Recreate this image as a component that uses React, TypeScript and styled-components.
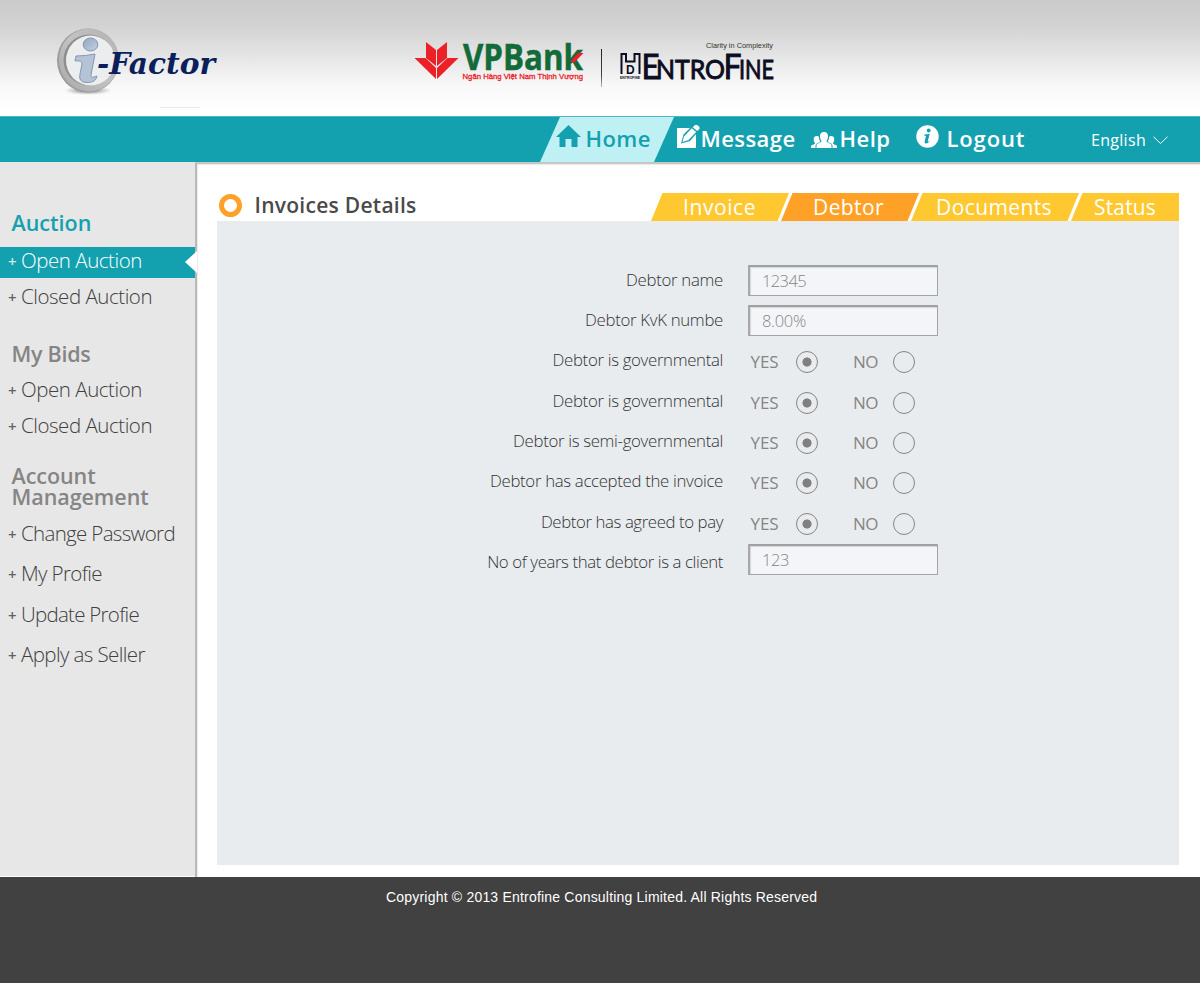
import React from "react";
import styled, { createGlobalStyle, css } from "styled-components";

const teal = "#13a1b0";
const sans = `"Open Sans", "Noto Sans", sans-serif`;

const Global = createGlobalStyle`
  *, *::before, *::after { box-sizing: border-box; }
  html, body { margin: 0; padding: 0; }
  body { background: #fff; font-family: ${sans}; }
  ul { list-style: none; margin: 0; padding: 0; }
`;

const Page = styled.div`
  width: 1200px;
  height: 983px;
  display: flex;
  flex-direction: column;
  overflow: hidden;
  background: #fff;
`;

const Header = styled.header`
  height: 116px;
  flex: none;
  display: flex;
  align-items: flex-start;
  background: linear-gradient(#cbcbcb 0, #d2d2d2 25px, #e4e4e4 55px, #f8f8f8 85px, #fefefe 108px, #fff 116px);
`;

const BrandLogo = styled.svg`
  display: block;
  flex: none;
  width: 200px;
  height: 116px;
  margin-left: 40px;
`;

const PartnerLogos = styled.svg`
  display: block;
  flex: none;
  width: 400px;
  height: 116px;
  margin-left: 160px;
`;

const Nav = styled.nav`
  height: 46px;
  flex: none;
  display: flex;
  align-items: stretch;
  padding-left: 540px;
  background: ${teal};
  border-top: 1px solid #4bb8c3;
`;

const NavItem = styled.a<{ $width: number; $active?: boolean; $pad: number; $gap: number }>`
  width: ${(p) => p.$width}px;
  flex: none;
  display: flex;
  align-items: center;
  padding: 0 0 3px ${(p) => p.$pad}px;
  gap: ${(p) => p.$gap}px;
  color: ${(p) => (p.$active ? teal : "#fff")};
  ${(p) =>
    p.$active &&
    css`
      background: #bff1f4;
      clip-path: polygon(20px 0, 100% 0, calc(100% - 20px) 100%, 0 100%);
    `}
`;

const NavText = styled.span<{ $track: number }>`
  font-size: 22px;
  line-height: 30px;
  font-weight: 600;
  white-space: nowrap;
  letter-spacing: ${(p) => p.$track}px;
`;

const Language = styled.button`
  margin: 0 32px 0 auto;
  padding: 0;
  border: 0;
  background: none;
  color: #fff;
  display: flex;
  align-items: center;
  gap: 7px;
  font: 400 16px/24px ${sans};
`;

const Icon = styled.svg<{ $up?: number; $down?: number }>`
  display: block;
  flex: none;
  margin-bottom: ${(p) => (p.$up ?? 0) * 2}px;
  margin-top: ${(p) => (p.$down ?? 0) * 2}px;
`;

const Body = styled.div`
  height: 715px;
  flex: none;
  display: flex;
`;

const Sidebar = styled.aside`
  width: 195px;
  height: 714px;
  flex: none;
  padding-top: 46px;
  background: #e7e7e7;
`;

const Group = styled.section<{ $top: number }>`
  margin-top: ${(p) => p.$top}px;
`;

const GroupTitle = styled.h2<{ $active?: boolean; $line: number; $track?: number }>`
  width: 160px;
  margin: 0 0 0 11.5px;
  font-size: 21.5px;
  font-weight: 600;
  line-height: ${(p) => p.$line}px;
  letter-spacing: ${(p) => p.$track ?? 0}px;
  color: ${(p) => (p.$active ? teal : "#858585")};
`;

const Menu = styled.ul<{ $top: number; $gap: number }>`
  display: flex;
  flex-direction: column;
  margin-top: ${(p) => p.$top}px;
  gap: ${(p) => p.$gap}px;
`;

const MenuItem = styled.li<{ $active?: boolean }>`
  height: 31px;
  display: flex;
  align-items: center;
  padding: 0 0 4px 8px;
  font-size: 20.5px;
  font-weight: 300;
  line-height: 27px;
  color: ${(p) => (p.$active ? "#fff" : "#404040")};
  position: relative;
  ${(p) =>
    p.$active &&
    css`
      background: ${teal};
      &::after {
        content: "";
        position: absolute;
        right: -2px;
        top: 4px;
        width: 12px;
        height: 22px;
        background: #fff;
        clip-path: polygon(100% 0, 100% 100%, 0 50%);
      }
    `}
`;

const Plus = styled.span`
  width: 13px;
  flex: none;
  font-size: 15px;
  font-weight: 600;
  line-height: 27px;
  padding-top: 2px;
  opacity: 0.8;
`;

const Tracked = styled.span<{ $track?: number }>`
  white-space: nowrap;
  letter-spacing: ${(p) => p.$track ?? 0}px;
`;

const Content = styled.main`
  flex: 1;
  display: flex;
  flex-direction: column;
  padding: 29px 21px 0 20px;
  border-left: 2px solid #b9b9b9;
  border-top: 2px solid #c6c6c6;
  box-shadow: inset 1px 1px 1px #eaeaea;
`;

const TitleBar = styled.div`
  height: 28px;
  display: flex;
  align-items: center;
`;

const Ring = styled.i`
  width: 23px;
  height: 23px;
  margin: -4px 13px 0 1.5px;
  border: 5px solid #ffa126;
  border-radius: 50%;
`;

const Title = styled.h1`
  margin: 0;
  padding-bottom: 4px;
  font-size: 21px;
  line-height: 26px;
  font-weight: 600;
  color: #4a4a4a;
`;

const Tabs = styled.div`
  display: flex;
  margin-left: auto;
  height: 28px;
`;

const Tab = styled.a<{ $width: number; $pad: number; $active?: boolean; $last?: boolean }>`
  width: ${(p) => p.$width}px;
  margin-left: -8px;
  padding: 0 0 0 ${(p) => p.$pad}px;
  font-size: 21px;
  line-height: 28px;
  color: #fff;
  background: ${(p) => (p.$active ? "#ffa126" : "#ffc730")};
  clip-path: ${(p) =>
    p.$last
      ? "polygon(11.5px 0, 100% 0, 100% 100%, 0 100%)"
      : "polygon(11.5px 0, 100% 0, calc(100% - 11.5px) 100%, 0 100%)"};
`;

const Panel = styled.form`
  height: 644px;
  padding-top: 38.6px;
  background: #e8ecef;
`;

const Row = styled.div`
  height: 40.35px;
  display: flex;
  align-items: center;
`;

const Label = styled.label`
  width: 506px;
  flex: none;
  display: flex;
  justify-content: flex-end;
  font-size: 16.8px;
  line-height: 24px;
  font-weight: 300;
  color: #333;
`;

const Field = styled.div<{ $shift: number }>`
  width: 190px;
  height: 31px;
  margin: ${(p) => p.$shift}px 0 0 25px;
  padding: 0 0 1px 12px;
  display: flex;
  align-items: center;
  border: 1px solid #a3a3a3;
  border-top: 2px solid #a0a0a0;
  border-left: 2px solid #a8a8a8;
  border-radius: 1px;
  background: #f4f5f8;
  box-shadow: inset 1px 1px 1px #d5d6d8;
  font-size: 16.5px;
  font-weight: 300;
  color: #858585;
`;

const Choice = styled.span<{ $width: number; $left: number }>`
  width: ${(p) => p.$width}px;
  display: flex;
  align-items: center;
  justify-content: space-between;
  margin-left: ${(p) => p.$left}px;
  padding-top: 3.5px;
  font-size: 17px;
  line-height: 24px;
  color: #858585;
`;

const Radio = styled.i<{ $on?: boolean }>`
  width: 22px;
  height: 22px;
  border: 1px solid #858585;
  border-radius: 50%;
  background: ${(p) => (p.$on ? "radial-gradient(circle, #808080 4.2px, transparent 4.9px)" : "none")};
`;

const Footer = styled.footer`
  height: 106px;
  flex: none;
  padding: 11px 0 0 386px;
  background: #414141;
  color: #fff;
  font: 14px/18px "Liberation Sans", Arial, sans-serif;
`;

const IFactor = () => (
  <BrandLogo viewBox="40 0 200 116">
    <defs>
      <linearGradient id="ring" x1="0" y1="1" x2="1" y2="0">
        <stop offset="0" stopColor="#a8a8a8" />
        <stop offset=".5" stopColor="#c2c2c2" />
        <stop offset="1" stopColor="#b2b2b2" />
      </linearGradient>
      <radialGradient id="shade">
        <stop offset="0" stopColor="#444" stopOpacity=".9" />
        <stop offset="1" stopColor="#999" stopOpacity="0" />
      </radialGradient>
      <linearGradient id="glass" x1="0" y1="0" x2="1" y2="1">
        <stop offset="0" stopColor="#93a7c0" />
        <stop offset="1" stopColor="#c3d0e0" />
      </linearGradient>
    </defs>
    <ellipse cx="88" cy="90.500" rx="24" ry="4.500" fill="url(#shade)" />
    <ellipse cx="88" cy="60.500" rx="31" ry="32" fill="#9c9c9c" />
    <ellipse cx="89" cy="60" rx="30" ry="31.500" fill="url(#ring)" />
    <ellipse cx="89" cy="60" rx="25.500" ry="25.500" fill="#8e8e8e" />
    <ellipse cx="90.500" cy="60.500" rx="24.500" ry="25" fill="#ecedee" />
    <ellipse cx="90.500" cy="44.500" rx="7.300" ry="6.500" fill="url(#glass)" stroke="#8094ad" />
    <path d="M76 56 Q86 56 95 54 L91 75 Q90 79 97 76 Q96 83 86 82.500 Q78 82 80 74 L82 64 Q82 60 75 61 Z" fill="#b4c3d5" stroke="#8498b0" />
    <text x="97" y="74" fontFamily="DejaVu Serif" fontWeight="700" fontStyle="italic" fontSize="29.500" fill="#0a1f5c" textLength="118" lengthAdjust="spacingAndGlyphs">-Factor</text>
    <path d="M160 107.500H200" stroke="#ddd" strokeWidth=".7" />
  </BrandLogo>
);

const Partners = () => (
  <PartnerLogos viewBox="400 0 400 116">
    <defs>
      <linearGradient id="rule" x1="0" y1="0" x2="0" y2="1">
        <stop offset="0" stopColor="#222" />
        <stop offset=".7" stopColor="#444" />
        <stop offset="1" stopColor="#bbb" />
      </linearGradient>
    </defs>
    <g fill="#ec2027">
      <path d="M426 42 L436 50 V66 L426 58 Z" />
      <path d="M447 42 L437 50 V66 L447 58 Z" />
      <path d="M414.500 58 H425.500 L436 68 V79 Z" />
      <path d="M458.500 58 H447.500 L437 68 V79 Z" />
    </g>
    <text x="463" y="69.500" fontFamily="Open Sans" fontWeight="700" fontSize="36" fill="#126b39" stroke="#126b39" strokeWidth=".5" textLength="120" lengthAdjust="spacingAndGlyphs">VPBank</text>
    <path d="M570.500 61.500 L578 53 H583.500 L574 63 Z" fill="#ec2027" />
    <text x="462.500" y="79.300" fontFamily="Liberation Sans" fontSize="8" fill="#ec2027" stroke="#ec2027" strokeWidth=".3" textLength="120.500" lengthAdjust="spacingAndGlyphs">Ngân Hàng Việt Nam Thịnh Vượng</text>
    <rect x="601" y="49" width="1" height="38" fill="url(#rule)" />
    <text x="706" y="48" fontFamily="Liberation Sans" fontSize="7.200" fill="#333" textLength="67" lengthAdjust="spacingAndGlyphs">Clarity in Complexity</text>
    <path d="M621.500 74 V54 H626 V61.500 H634.500 V54 H639.500 V74" fill="none" stroke="#0c0c22" strokeWidth="2" />
    <text x="626" y="73.500" fontFamily="Liberation Sans" fontWeight="700" fontSize="12" fill="#0c0c22">D</text>
    <text x="620" y="78.500" fontFamily="Liberation Sans" fontWeight="700" fontSize="4" fill="#0c0c22" textLength="20" lengthAdjust="spacingAndGlyphs">ENTROFINE</text>
    <g fontFamily="Lato" fill="#0c0c22" stroke="#0c0c22" strokeWidth=".9">
      <text x="641.500" y="78.500" fontSize="35" textLength="18" lengthAdjust="spacingAndGlyphs">E</text>
      <text x="656" y="78.500" fontSize="26.500" textLength="69" lengthAdjust="spacingAndGlyphs">NTRO</text>
      <text x="723.500" y="78.500" fontSize="35" textLength="18" lengthAdjust="spacingAndGlyphs">F</text>
      <text x="739" y="78.500" fontSize="26.500" textLength="35" lengthAdjust="spacingAndGlyphs">INE</text>
    </g>
  </PartnerLogos>
);

const HomeIcon = () => (
  <Icon $up={2} width="25" height="22" viewBox="0 0 25 22" fill="currentColor">
    <path d="M12.500 0 L25 12 H21.500 V22 H15.500 V14 H9.500 V22 H3.500 V12 H0 Z" />
  </Icon>
);

const EditIcon = () => (
  <Icon $up={2} width="23" height="23" viewBox="0 0 23 23" fill="currentColor">
    <path d="M0 3 H13 L6.500 9.500 L4 18.500 L13 16 L19 9 V23 H0 Z" />
    <path d="M14.800 3.200 L19.200 7 L11.500 15 L5.500 17 L7 11.500 Z" />
    <path d="M15.700 2.300 L18 0 Q20 -.5 21.500 1 Q23 2.500 22.500 3.800 L20.200 6 Z" />
  </Icon>
);

const PeopleIcon = () => (
  <Icon $down={2} width="26" height="16" viewBox="0 0 26 16" fill="currentColor">
    <path d="M13 0 C16 0 17.300 2 17 5 C16.800 7 16 8 15.500 9 C15.500 11 20 11 20.500 13 V16 H5.500 V13 C6 11 10.500 11 10.500 9 C10 8 9.200 7 9 5 C8.700 2 10 0 13 0 Z" />
    <path d="M6 4 C7 4 7.800 4.200 8 5.500 C8 8 9 9 9.300 10 C6 11.300 4.800 11.500 4.500 14 V16 H0 V14 C.3 12.800 4 12.500 4 11.200 C2.500 9 1.500 4 6 4 Z" />
    <path d="M20 4 C19 4 18.200 4.200 18 5.500 C18 8 17 9 16.700 10 C20 11.300 21.200 11.500 21.500 14 V16 H26 V14 C25.700 12.800 22 12.500 22 11.200 C23.500 9 24.500 4 20 4 Z" />
  </Icon>
);

const InfoIcon = () => (
  <Icon $up={2} width="23" height="23" viewBox="0 0 23 23">
    <circle cx="11.500" cy="11.500" r="11.200" fill="#fff" />
    <circle cx="12.700" cy="5.500" r="1.900" fill={teal} />
    <path d="M8.500 9.500 Q11 9.500 13.700 8.800 L11.700 16.500 Q12.500 16.800 14 15.500 Q12 18.800 9.500 18.500 Q8.200 18.200 8.700 16 L10 11 Q9.500 10.300 8 10.500 Z" fill={teal} />
  </Icon>
);

const auctionItems: [string, number][] = [["Open Auction", -0.45], ["Closed Auction", -0.46]];

const accountItems: [string, number][] = [
  ["Change Password", -0.67],
  ["My Profie", -0.61],
  ["Update Profie", -0.73],
  ["Apply as Seller", -0.6],
];

const choices: [string, number][] = [
  ["Debtor is governmental", -0.32],
  ["Debtor is governmental", -0.32],
  ["Debtor is semi-governmental", -0.32],
  ["Debtor has accepted the invoice", -0.32],
  ["Debtor has agreed to pay", -0.4],
];

const MenuEntries = ({ items, active }: { items: [string, number][]; active?: number }) => (
  <>
    {items.map(([text, track], i) => (
      <MenuItem key={text} $active={i === active}>
        <Plus>+</Plus>
        <Tracked $track={track}>{text}</Tracked>
      </MenuItem>
    ))}
  </>
);

const TextRow = ({ label, track, value, valueTrack, shift }: { label: string; track: number; value: string; valueTrack: number; shift: number }) => (
  <Row>
    <Label><Tracked $track={track}>{label}</Tracked></Label>
    <Field $shift={shift}><Tracked $track={valueTrack}>{value}</Tracked></Field>
  </Row>
);

export default function App() {
  return (
    <Page>
      <Global />
      <Header>
        <IFactor />
        <Partners />
      </Header>
      <Nav>
        <NavItem $active $width={134} $pad={16} $gap={4.5}><HomeIcon /><NavText $track={0.4}>Home</NavText></NavItem>
        <NavItem $width={134} $pad={3} $gap={0.5}><EditIcon /><NavText $track={0.43}>Message</NavText></NavItem>
        <NavItem $width={104} $pad={3} $gap={2.5}><PeopleIcon /><NavText $track={0.5}>Help</NavText></NavItem>
        <NavItem $width={120} $pad={3.5} $gap={8}><InfoIcon /><NavText $track={0.85}>Logout</NavText></NavItem>
        <Language type="button">
          <Tracked $track={0.3}>English</Tracked>
          <Icon $down={1} width="15" height="9" viewBox="0 0 15 9" fill="none" stroke="#fff"><path d="M.5 .8 L7.500 7.500 L14.500 .8" /></Icon>
        </Language>
      </Nav>
      <Body>
        <Sidebar>
          <Group $top={0}>
            <GroupTitle $active $line={30}>Auction</GroupTitle>
            <Menu $top={9} $gap={5}><MenuEntries items={auctionItems} active={0} /></Menu>
          </Group>
          <Group $top={25}>
            <GroupTitle $line={30} $track={-0.27}>My Bids</GroupTitle>
            <Menu $top={7} $gap={5}><MenuEntries items={auctionItems} /></Menu>
          </Group>
          <Group $top={23}>
            <GroupTitle $line={20.5} $track={-0.06}>Account Management</GroupTitle>
            <Menu $top={13} $gap={9.3}><MenuEntries items={accountItems} /></Menu>
          </Group>
        </Sidebar>
        <Content>
          <TitleBar>
            <Ring />
            <Title><Tracked $track={0.27}>Invoices Details</Tracked></Title>
            <Tabs>
              <Tab $width={138} $pad={32}><Tracked $track={0.57}>Invoice</Tracked></Tab>
              <Tab $width={138} $pad={32} $active><Tracked $track={0.4}>Debtor</Tracked></Tab>
              <Tab $width={168} $pad={25}><Tracked $track={0.4}>Documents</Tracked></Tab>
              <Tab $width={108} $pad={23} $last><Tracked $track={0.16}>Status</Tracked></Tab>
            </Tabs>
          </TitleBar>
          <Panel>
            <TextRow label="Debtor name" track={-0.3} value="12345" valueTrack={-0.62} shift={1} />
            <TextRow label="Debtor KvK numbe" track={-0.3} value="8.00%" valueTrack={-0.3} shift={1.6} />
            {choices.map(([text, track], i) => (
              <Row key={i}>
                <Label><Tracked $track={track}>{text}</Tracked></Label>
                <Choice $left={27.5} $width={67.5}><Tracked $track={-0.09}>YES</Tracked><Radio $on /></Choice>
                <Choice $left={35} $width={62}><Tracked $track={-0.5}>NO</Tracked><Radio /></Choice>
              </Row>
            ))}
            <TextRow label="No of years that debtor is a client" track={-0.39} value="123" valueTrack={-0.42} shift={-6} />
          </Panel>
        </Content>
      </Body>
      <Footer><Tracked $track={0.2}>Copyright © 2013 Entrofine Consulting Limited. All Rights Reserved</Tracked></Footer>
    </Page>
  );
}
